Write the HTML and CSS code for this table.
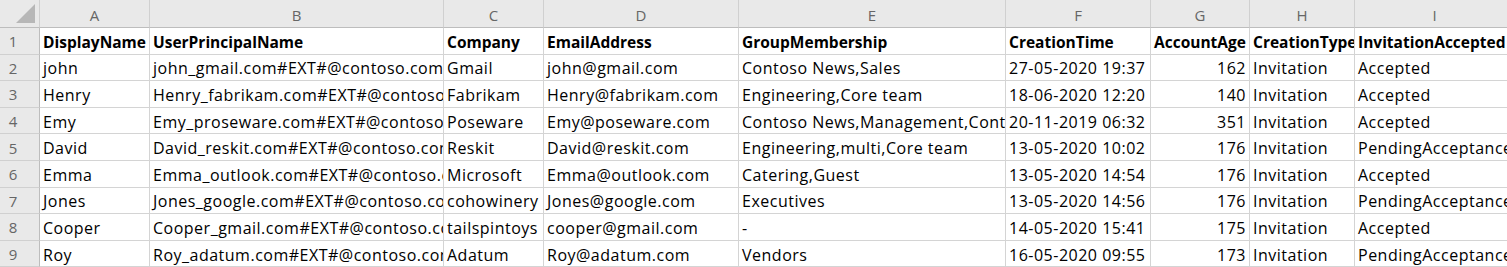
FILE: index.html
```html
<!DOCTYPE html>
<html>
<head>
<meta charset="utf-8">
<link rel="stylesheet" href="styles.css">
</head>
<body>
<div class="sheet">
  <div class="corner"><span class="tri"></span></div>
  <div class="colhdr">A</div><div class="colhdr">B</div><div class="colhdr">C</div><div class="colhdr">D</div><div class="colhdr">E</div><div class="colhdr">F</div><div class="colhdr">G</div><div class="colhdr">H</div><div class="colhdr">I</div>

  <div class="rowhdr">1</div>
  <div class="cell b">DisplayName</div><div class="cell b">UserPrincipalName</div><div class="cell b">Company</div><div class="cell b">EmailAddress</div><div class="cell b">GroupMembership</div><div class="cell b">CreationTime</div><div class="cell b">AccountAge</div><div class="cell b">CreationType</div><div class="cell b">InvitationAccepted</div>

  <div class="rowhdr">2</div>
  <div class="cell">john</div><div class="cell">john_gmail.com#EXT#@contoso.com</div><div class="cell">Gmail</div><div class="cell">john@gmail.com</div><div class="cell">Contoso News,Sales</div><div class="cell">27-05-2020 19:37</div><div class="cell num">162</div><div class="cell">Invitation</div><div class="cell">Accepted</div>

  <div class="rowhdr">3</div>
  <div class="cell">Henry</div><div class="cell">Henry_fabrikam.com#EXT#@contoso.com</div><div class="cell">Fabrikam</div><div class="cell">Henry@fabrikam.com</div><div class="cell">Engineering,Core team</div><div class="cell">18-06-2020 12:20</div><div class="cell num">140</div><div class="cell">Invitation</div><div class="cell">Accepted</div>

  <div class="rowhdr">4</div>
  <div class="cell">Emy</div><div class="cell">Emy_proseware.com#EXT#@contoso.com</div><div class="cell">Poseware</div><div class="cell">Emy@poseware.com</div><div class="cell">Contoso News,Management,Contoso</div><div class="cell">20-11-2019 06:32</div><div class="cell num">351</div><div class="cell">Invitation</div><div class="cell">Accepted</div>

  <div class="rowhdr">5</div>
  <div class="cell">David</div><div class="cell">David_reskit.com#EXT#@contoso.com</div><div class="cell">Reskit</div><div class="cell">David@reskit.com</div><div class="cell">Engineering,multi,Core team</div><div class="cell">13-05-2020 10:02</div><div class="cell num">176</div><div class="cell">Invitation</div><div class="cell">PendingAcceptance</div>

  <div class="rowhdr">6</div>
  <div class="cell">Emma</div><div class="cell">Emma_outlook.com#EXT#@contoso.com</div><div class="cell">Microsoft</div><div class="cell">Emma@outlook.com</div><div class="cell">Catering,Guest</div><div class="cell">13-05-2020 14:54</div><div class="cell num">176</div><div class="cell">Invitation</div><div class="cell">Accepted</div>

  <div class="rowhdr">7</div>
  <div class="cell">Jones</div><div class="cell">Jones_google.com#EXT#@contoso.com</div><div class="cell">cohowinery</div><div class="cell">Jones@google.com</div><div class="cell">Executives</div><div class="cell">13-05-2020 14:56</div><div class="cell num">176</div><div class="cell">Invitation</div><div class="cell">PendingAcceptance</div>

  <div class="rowhdr">8</div>
  <div class="cell">Cooper</div><div class="cell">Cooper_gmail.com#EXT#@contoso.com</div><div class="cell">tailspintoys</div><div class="cell">cooper@gmail.com</div><div class="cell">-</div><div class="cell">14-05-2020 15:41</div><div class="cell num">175</div><div class="cell">Invitation</div><div class="cell">Accepted</div>

  <div class="rowhdr">9</div>
  <div class="cell">Roy</div><div class="cell">Roy_adatum.com#EXT#@contoso.com</div><div class="cell">Adatum</div><div class="cell">Roy@adatum.com</div><div class="cell">Vendors</div><div class="cell">16-05-2020 09:55</div><div class="cell num">173</div><div class="cell">Invitation</div><div class="cell">PendingAcceptance</div>
</div>
</body>
</html>
```

FILE: styles.css
```css
html, body {
  margin: 0;
  padding: 0;
  background: #ffffff;
  overflow: hidden;
}

.sheet {
  display: grid;
  grid-template-columns: 40px 110px 294px 100px 195px 267px 145px 99px 105px 160px;
  grid-template-rows: 28px repeat(9, 26.6px);
  width: 1515px;
  font-family: "Open Sans", "Noto Sans", sans-serif;
  font-size: 16px;
  color: #000;
}

.corner {
  background: #e9e9e9;
  border-right: 1px solid #d0d0d0;
  border-bottom: 1px solid #bdbdbd;
  position: relative;
}

.tri {
  position: absolute;
  right: 4px;
  bottom: 4px;
  width: 0;
  height: 0;
  border-left: 19px solid transparent;
  border-bottom: 19px solid #b7b7b7;
}

.colhdr {
  background: #e9e9e9;
  color: #666;
  font-size: 15px;
  border-right: 1px solid #d0d0d0;
  border-bottom: 1px solid #bdbdbd;
  display: flex;
  align-items: center;
  justify-content: center;
  padding-top: 3px;
  box-sizing: border-box;
}

.rowhdr {
  background: #e9e9e9;
  color: #666;
  font-size: 15px;
  border-right: 1px solid #bdbdbd;
  border-bottom: 1px solid #d0d0d0;
  display: flex;
  align-items: center;
  justify-content: center;
  padding-right: 13px;
  padding-top: 1px;
  box-sizing: border-box;
}

.cell {
  border-right: 1px solid #d4d4d4;
  border-bottom: 1px solid #d4d4d4;
  white-space: nowrap;
  overflow: hidden;
  padding: 2px 3px 0 3px;
  box-sizing: border-box;
  display: flex;
  align-items: center;
  letter-spacing: 0.5px;
}

.b {
  font-weight: 700;
  font-size: 15.5px;
  letter-spacing: 0;
}

.num {
  justify-content: flex-end;
}
```
